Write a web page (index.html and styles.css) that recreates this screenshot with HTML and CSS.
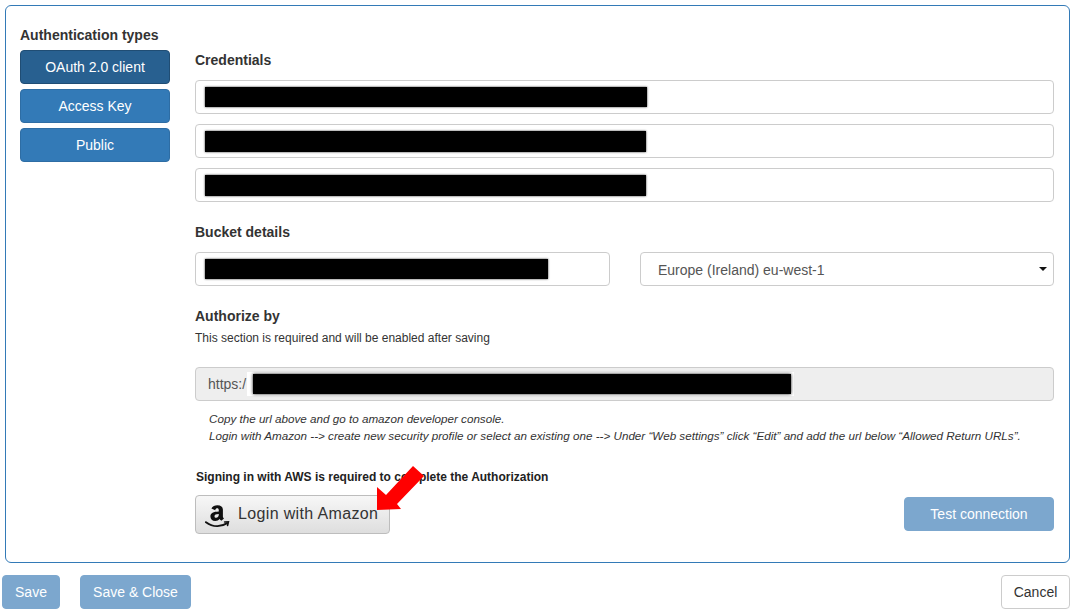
FILE: index.html
```html
<!DOCTYPE html>
<html lang="en">
<head>
<meta charset="utf-8">
<title>Authentication</title>
<link rel="stylesheet" href="styles.css">
</head>
<body>
<main class="panel">
  <aside class="types">
    <h4 class="types-title">Authentication types</h4>
    <button class="btn btn-primary btn-active">OAuth 2.0 client</button>
    <button class="btn btn-primary">Access Key</button>
    <button class="btn btn-primary">Public</button>
  </aside>
  <section class="form">
    <h4 class="heading heading-credentials">Credentials</h4>
    <div class="field"><span class="redact redact-1"></span></div>
    <div class="field"><span class="redact redact-2"></span></div>
    <div class="field"><span class="redact redact-3"></span></div>

    <h4 class="heading heading-bucket">Bucket details</h4>
    <div class="bucket-row">
      <div class="field field-half"><span class="redact redact-bucket"></span></div>
      <div class="field field-half field-select">
        <span class="select-text">Europe (Ireland) eu-west-1</span>
        <span class="caret"></span>
      </div>
    </div>

    <h4 class="heading heading-auth">Authorize by</h4>
    <p class="hint">This section is required and will be enabled after saving</p>
    <div class="field field-disabled">
      <span class="url-text">https:/</span>
      <span class="url-mask"><span class="redact redact-url"></span></span>
    </div>
    <p class="notes">Copy the url above and go to amazon developer console.<br>Login with Amazon --&gt; create new security profile or select an existing one --&gt; Under “Web settings” click “Edit” and add the url below “Allowed Return URLs”.</p>
    <p class="signing">Signing in with AWS is required to complete the Authorization</p>
    <div class="action-row">
      <button class="amazon">
        <svg class="amazon-logo" width="26" height="26" viewBox="0 0 26 26" aria-hidden="true">
          <path d="M7.4 6.6 C8.6 4.2 10.8 3.2 13.4 3.2 C16.9 3.2 18.9 4.8 18.9 7.8 V14.2 C18.9 15.2 19.3 15.8 20 16.4 L17.4 18.8 C16.6 18.2 16 17.5 15.6 16.9 C14.6 18.1 13.2 18.9 11.2 18.9 C8.4 18.9 6.4 17.1 6.4 14.4 C6.4 10.9 9.4 9.6 14.8 9.4 V8.4 C14.8 7 14.3 6.3 13.2 6.3 C12.2 6.3 11.6 7 11.2 8.2 Z M14.8 12 C11.9 12.1 10.5 12.8 10.5 14.2 C10.5 15.2 11.1 15.8 12.1 15.8 C13.8 15.8 14.8 14.4 14.8 12.6 Z" fill="#111" fill-rule="evenodd"/>
          <path d="M2 20.2 C9 25.2 17 25.2 23.2 21.2" fill="none" stroke="#111" stroke-width="2" stroke-linecap="round"/>
          <path d="M20.6 20 L24.4 19.8 L23.6 23.4" fill="none" stroke="#111" stroke-width="1.6" stroke-linecap="round"/>
        </svg>
        <span>Login with Amazon</span>
      </button>
      <button class="btn btn-primary btn-disabled btn-test">Test connection</button>
      <svg class="arrow" width="50" height="52" viewBox="0 0 50 52" aria-hidden="true">
        <polygon points="1,49 1,26 10,34 37,5 48,15 21,43 25,48" fill="#f00"/>
      </svg>
    </div>
  </section>
</main>
<footer class="footer">
  <button class="btn btn-primary btn-disabled btn-save">Save</button>
  <button class="btn btn-primary btn-disabled btn-save-close">Save &amp; Close</button>
  <button class="btn btn-default">Cancel</button>
</footer>
</body>
</html>
```
FILE: styles.css
```css
* { box-sizing: border-box; }
html, body { margin: 0; padding: 0; }
body {
  width: 1076px;
  height: 614px;
  overflow: hidden;
  background: #fff;
  color: #333;
  font-family: "Liberation Sans", Arial, sans-serif;
  font-size: 14px;
  line-height: 20px;
}
h4, p { margin: 0; }
button { font-family: inherit; }

.panel {
  display: flex;
  width: 1065px;
  height: 558px;
  margin: 5px 0 0 5px;
  padding: 0 15px 0 14px;
  border: 1px solid #337ab7;
  border-radius: 6px;
}
.types { width: 150px; margin-right: 25px; flex: none; display: flex; flex-direction: column; }
.types-title { font-size: 14px; font-weight: bold; margin-top: 19px; margin-bottom: 5px; }

.btn {
  display: block;
  height: 34px;
  padding: 0;
  font-size: 14px;
  line-height: 20px;
  text-align: center;
  border: 1px solid transparent;
  border-radius: 4px;
}
.btn-primary { color: #fff; background: #337ab7; border-color: #2e6da4; }
.types .btn { width: 150px; margin-bottom: 5px; }
.btn-active { background: #286090; border-color: #204d74; }
.btn-disabled { background: #7ca7ce; border-color: #7ca7ce; }
.btn-default { color: #333; background: #fff; border-color: #ccc; width: 69px; margin-left: auto; }

.form { flex: 1; min-width: 0; }
.heading { font-size: 14px; font-weight: bold; }
.heading-credentials { margin-top: 44px; margin-bottom: 10px; }
.heading-bucket { margin-top: 20px; margin-bottom: 10px; }
.heading-auth { margin-top: 20px; }

.field {
  position: relative;
  display: flex;
  align-items: center;
  height: 34px;
  margin-bottom: 10px;
  padding: 0 9px;
  background: #fff;
  border: 1px solid #ccc;
  border-radius: 4px;
}
.redact { display: block; height: 20px; background: #000; box-shadow: 0 0 2px rgba(0,0,0,.8); }
.redact-1 { width: 442px; }
.redact-2 { width: 441px; height: 21px; }
.redact-3 { width: 441px; height: 21px; }
.redact-bucket { width: 343px; }
.redact-url { width: 538px; box-shadow: 0 0 3px rgba(0,0,0,.9); }

.bucket-row { display: grid; grid-template-columns: 415px 414px; column-gap: 30px; }
.field-half { margin-bottom: 0; }
.field-select { justify-content: space-between; padding: 1px 6px 0 17px; color: #555; }
.select-text { line-height: 20px; }
.caret { width: 0; height: 0; margin-top: -2px; border-left: 4px solid transparent; border-right: 4px solid transparent; border-top: 4px solid #111; }

.hint { font-size: 12px; line-height: 17px; margin-top: 4px; margin-bottom: 20px; }
.field-disabled { background: #eee; color: #555; padding: 0 12px; margin-bottom: 9px; }
.url-text { flex: none; }
.url-mask { display: block; margin-left: 1px; padding: 2px 3px 2px 6px; background: #fff; height: 24px; }

.notes { margin-left: 14px; font-size: 11.66px; line-height: 17px; font-style: italic; }
.signing { margin-top: 25px; margin-left: 1px; font-size: 12px; line-height: 17px; font-weight: bold; color: #222; }

.action-row { position: relative; display: flex; align-items: flex-start; justify-content: space-between; margin-top: 9px; }
.amazon {
  display: flex;
  align-items: center;
  width: 195px;
  height: 39px;
  padding: 0 0 0 8px;
  background: linear-gradient(#f7f7f7, #dedede);
  border: 1px solid #bdbdbd;
  border-radius: 4px;
  color: #333;
  font-family: "Liberation Sans", sans-serif;
  font-size: 16px;
}
.amazon span { margin: 0 0 2px 8px; letter-spacing: 0.35px; }
.amazon-logo { flex: none; }
.btn-test { width: 150px; margin-top: 2px; }
.arrow { position: absolute; left: 181px; top: -34px; }

.footer { display: flex; align-items: flex-start; width: 1068px; margin: 12px 0 0 2px; }
.btn-save { width: 58px; }
.btn-save-close { width: 111px; margin-left: 20px; }
```
